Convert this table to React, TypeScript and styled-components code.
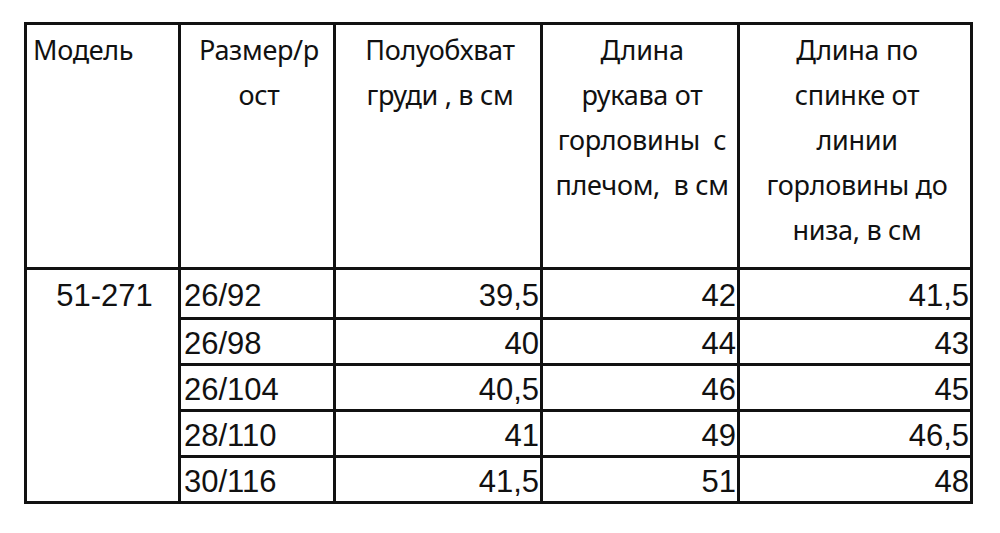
import styled, { createGlobalStyle } from "styled-components";

const GlobalStyle = createGlobalStyle`
  html, body {
    margin: 0;
    padding: 0;
    background: #fff;
  }
`;

interface SizeRow {
  size: string;
  chest: string;
  sleeve: string;
  back: string;
}

const rows: SizeRow[] = [
  { size: "26/92", chest: "39,5", sleeve: "42", back: "41,5" },
  { size: "26/98", chest: "40", sleeve: "44", back: "43" },
  { size: "26/104", chest: "40,5", sleeve: "46", back: "45" },
  { size: "28/110", chest: "41", sleeve: "49", back: "46,5" },
  { size: "30/116", chest: "41,5", sleeve: "51", back: "48" },
];

export default function App() {
  return (
    <>
      <GlobalStyle />
      <Page>
        <Table>
          <colgroup>
            <col style={{ width: 154 }} />
            <col style={{ width: 155 }} />
            <col style={{ width: 207 }} />
            <col style={{ width: 197 }} />
            <col style={{ width: 233 }} />
          </colgroup>
          <thead>
            <HeadRow>
              <Head $align="left">Модель</Head>
              <Head>Размер/р<br />ост</Head>
              <Head>Полуобхват<br />груди , в см</Head>
              <Head>Длина<br />рукава от<br />горловины&nbsp; с<br />плечом,&nbsp; в см</Head>
              <Head>Длина по<br />спинке от<br />линии<br />горловины до<br />низа, в см</Head>
            </HeadRow>
          </thead>
          <tbody>
            {rows.map((r, i) => (
              <BodyRow key={r.size} $first={i === 0}>
                {i === 0 && <Model rowSpan={rows.length}>51-271</Model>}
                <Cell>{r.size}</Cell>
                <Cell $align="right">{r.chest}</Cell>
                <Cell $align="right">{r.sleeve}</Cell>
                <Cell $align="right">{r.back}</Cell>
              </BodyRow>
            ))}
          </tbody>
        </Table>
      </Page>
    </>
  );
}

const Page = styled.div`
  padding: 22px 0 0 24px;
  width: 1000px;
  height: 533px;
  box-sizing: border-box;
`;

const Table = styled.table`
  border-collapse: collapse;
  table-layout: fixed;
  width: 948px;
  border: 3px solid #111;
  color: #111;
`;

const HeadRow = styled.tr`
  height: 245px;
`;

const Head = styled.th<{ $align?: "left" | "center" }>`
  border: 3px solid #111;
  vertical-align: top;
  text-align: ${(p) => p.$align ?? "center"};
  font-family: "Noto Sans", "Open Sans", sans-serif;
  font-weight: 400;
  font-size: 27px;
  letter-spacing: -0.3px;
  line-height: 45px;
  padding: 2px 2px 0 6px;
  white-space: nowrap;
  overflow: hidden;
`;

const BodyRow = styled.tr<{ $first?: boolean }>`
  height: ${(p) => (p.$first ? 50 : 46)}px;
`;

const Cell = styled.td<{ $align?: "left" | "right" }>`
  border: 3px solid #111;
  text-align: ${(p) => p.$align ?? "left"};
  font-family: "Liberation Sans", Arial, sans-serif;
  font-size: 31px;
  line-height: 32px;
  padding: 4px 1px 0 3px;
  vertical-align: middle;
  white-space: nowrap;
`;

const Model = styled.td`
  border: 3px solid #111;
  text-align: center;
  vertical-align: top;
  font-family: "Liberation Sans", Arial, sans-serif;
  font-size: 31px;
  line-height: 32px;
  padding: 10px 0 0 4px;
`;
